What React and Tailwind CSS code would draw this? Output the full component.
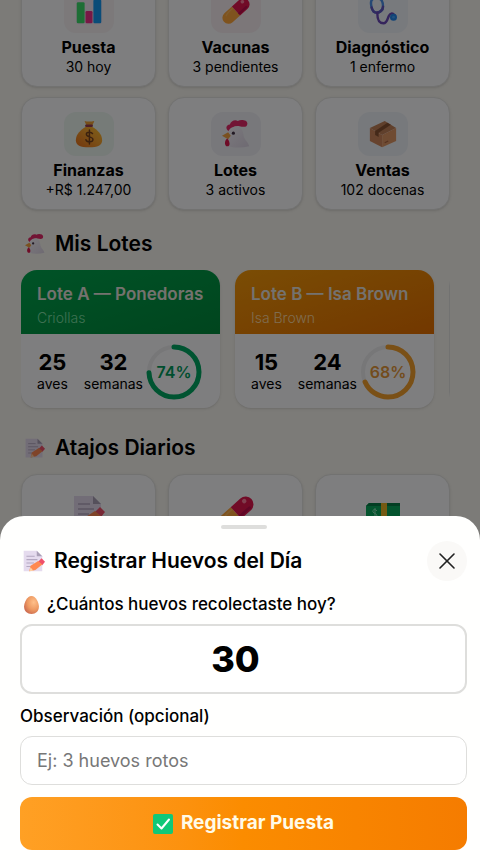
import { X } from "lucide-react";
import { useState } from "react";

function ChartIcon({ className }) {
  return (
    <svg viewBox="0 0 32 32" className={className} aria-hidden="true">
      <rect x="1" y="0" width="30" height="31" rx="3" fill="#f3e8f5" />
      <rect x="2" y="6" width="9" height="24" rx="1.5" fill="#3ddc6a" />
      <rect x="12" y="16" width="8" height="14" rx="1.5" fill="#f0308a" />
      <rect x="21" y="3" width="9" height="27" rx="1.5" fill="#1499f0" />
    </svg>
  );
}

function PillIcon({ className }) {
  return (
    <svg viewBox="0 0 32 32" className={className} aria-hidden="true">
      <g transform="rotate(-42 16 16)">
        <path d="M16 9H4.500a7 7 0 0 0 0 14H16z" fill="#ffa63d" />
        <path d="M16 9h11.500a7 7 0 0 1 0 14H16z" fill="#e3174f" />
        <path d="M4 12.500c3-1.500 7-1.500 11-1.200" stroke="#ffb95a" strokeWidth="1.400" fill="none" strokeLinecap="round" />
        <circle cx="28.500" cy="13" r="2" fill="#ff7f9f" />
        <path d="M17 20.500h11" stroke="#c00d4c" strokeWidth="2.500" strokeLinecap="round" />
      </g>
    </svg>
  );
}

function StethoscopeIcon({ className }) {
  return (
    <svg viewBox="0 0 32 32" className={className} aria-hidden="true" fill="none" strokeLinecap="round">
      <path d="M5 2C2 3 2 8 3 12c1 4 3 6 6 6s7-3 7-7c0-4-1-8-4-9" stroke="#4b91e8" strokeWidth="2.800" />
      <path d="M3 12c1 4 3 6 6 6s7-3 7-7" stroke="#6256c0" strokeWidth="2.800" />
      <path d="M9.500 18c0 7 1 12 7 12s4-10 9-11c2-.5 3 1 4 2" stroke="#6a48b8" strokeWidth="2.800" />
      <circle cx="28" cy="23" r="4" fill="#2489ee" />
      <circle cx="28" cy="23" r="1.500" fill="#46a4ff" />
    </svg>
  );
}

function MoneyBagIcon({ className }) {
  return (
    <svg viewBox="0 0 32 32" className={className} aria-hidden="true">
      <defs>
        <linearGradient id="bag" x1="0" y1="1" x2="1" y2="0">
          <stop offset="0" stopColor="#e86f1c" />
          <stop offset=".55" stopColor="#f5a02e" />
          <stop offset="1" stopColor="#ffc02e" />
        </linearGradient>
      </defs>
      <path d="M11 1c3 1 7 1 11 0-.5 2-1.500 3-2 5h-7c-.5-2-1.500-3-2-5z" fill="#efa035" />
      <path d="M12 8h8c5 3 11 8 11 15 0 6-5 8-15 8S1 29 1 23C1 16 7 11 12 8z" fill="url(#bag)" />
      <rect x="11.500" y="5" width="9" height="3" rx="1.500" fill="#993c50" />
      <path d="M20 15.500c-1-2-7-2.500-7 .7 0 3.800 7.500 2.300 7.500 6 0 3.500-7 3.500-8 .3M16.500 11.500v16" stroke="#77431e" strokeWidth="1.700" fill="none" strokeLinecap="round" />
    </svg>
  );
}

function HenIcon({ className }) {
  return (
    <svg viewBox="0 0 32 32" className={className} aria-hidden="true">
      <defs>
        <linearGradient id="hen" x1="0" y1="0" x2="1" y2="1">
          <stop offset="0" stopColor="#f8f4fb" />
          <stop offset="1" stopColor="#dcd4e4" />
        </linearGradient>
      </defs>
      <path d="M8 13C3 10 5 5 9 5c1-4 6-6 9-4 4-2 11-1 11 3 0 5-5 4-9 3-4-1-8 1-12 6z" fill="#e52868" />
      <path d="M7 14c1-5 7-8 12-6 5 2 5 7 6 11 1 4 5 6 6 11-8 2-17 2-24 0 2-5 0-10 0-16z" fill="url(#hen)" />
      <path d="M7 14l-7 4 7 4 3-4z" fill="#f4a340" />
      <path d="M6 21c-4 3-3 9 0 9 4 0 3-6 0-9z" fill="#df194e" />
      <circle cx="13" cy="15" r="1.800" fill="#443448" />
    </svg>
  );
}

function BoxIcon({ className }) {
  return (
    <svg viewBox="0 0 32 32" className={className} aria-hidden="true">
      <path d="M1 9L18 1l13 8-16 8z" fill="#c08058" />
      <path d="M1 9l14 8v14L1 24z" fill="#cf875c" />
      <path d="M15 17l16-8v15l-16 7z" fill="#df9665" />
      <path d="M7 12.500L21 3l4 2.500-14 9v5l-4-2.500z" fill="#895333" />
      <path d="M18 26l4-2" stroke="#aa6540" strokeWidth="1.500" />
    </svg>
  );
}

function MemoIcon({ className }) {
  return (
    <svg viewBox="0 0 32 32" className={className} aria-hidden="true">
      <path d="M1 1h19l8 8v22H1z" fill="#e5dbee" />
      <path d="M20 1l8 8h-8z" fill="#aaa0b7" />
      <path d="M5 9h12M5 14h16M5 19h11M5 24h7" stroke="#b4a8c1" strokeWidth="1.500" />
      <path d="M27 12l5 5-4 5-6-5z" fill="#f0506a" />
      <path d="M22 16l6 5-10 8-9 2 2-8z" fill="#ff8952" />
      <path d="M11 25l-2 6 6-1z" fill="#ffd0a4" />
    </svg>
  );
}

function CashIcon({ className }) {
  return (
    <svg viewBox="0 0 34 28" className={className} aria-hidden="true">
      <path d="M3 0h31v28H0V3z" fill="#08a85c" />
      <path d="M0 3l3-3h31v3z" fill="#067c47" />
      <path d="M15 0h6v28h-6z" fill="#e9b526" />
      <path d="M11 8C9 5 6 7 7 9s4 1 4 4-4 2-5 0M9 5v10" stroke="#8be0b6" fill="none" />
    </svg>
  );
}

function EggIcon({ className }) {
  return (
    <svg viewBox="0 0 28 34" className={className} aria-hidden="true">
      <defs>
        <radialGradient id="egg" cx=".65" cy=".35" r=".75">
          <stop offset="0" stopColor="#ffc08a" />
          <stop offset=".55" stopColor="#ee9a62" />
          <stop offset="1" stopColor="#c9674e" />
        </radialGradient>
      </defs>
      <path d="M14 0c8 0 14 12 14 20 0 9-6 14-14 14S0 29 0 20C0 12 6 0 14 0z" fill="url(#egg)" />
    </svg>
  );
}

function CheckIcon({ className }) {
  return (
    <svg viewBox="0 0 20 20" className={className} aria-hidden="true">
      <rect width="20" height="20" rx="2" fill="#10c878" />
      <path d="M4.500 10.500l4 4 7.500-9" stroke="#fff" strokeWidth="2" fill="none" strokeLinecap="round" strokeLinejoin="round" />
    </svg>
  );
}

const MODULES = [
  { title: "Puesta", detail: "30 hoy", Icon: ChartIcon, tint: "bg-[#f8f2f4]" },
  { title: "Vacunas", detail: "3 pendientes", Icon: PillIcon, tint: "bg-[#f8eff2]" },
  { title: "Diagnóstico", detail: "1 enfermo", Icon: StethoscopeIcon, tint: "bg-[#f0f4fa]" },
  { title: "Finanzas", detail: "+R$ 1.247,00", Icon: MoneyBagIcon, tint: "bg-[#ecf6f0]" },
  { title: "Lotes", detail: "3 activos", Icon: HenIcon, tint: "bg-[#f0f0f6]" },
  { title: "Ventas", detail: "102 docenas", Icon: BoxIcon, tint: "bg-[#eff3f8]" },
];

const FLOCKS = [
  { name: "Lote A — Ponedoras", breed: "Criollas", birds: 25, weeks: 32, rate: 74, head: "from-[#00a64e] to-[#008a3c]", sub: "text-[#7ee0a5]", ring: "#00a862", rateText: "text-[#009d5c]" },
  { name: "Lote B — Isa Brown", breed: "Isa Brown", birds: 15, weeks: 24, rate: 68, head: "from-[#f59a0a] to-[#e56f00]", sub: "text-[#ffd9a0]", ring: "#f5a02d", rateText: "text-[#e6993a]" },
];

const SHORTCUTS = [
  { label: "Registrar puesta", Icon: MemoIcon, size: "h-8 w-8" },
  { label: "Registrar vacuna", Icon: PillIcon, size: "h-9 w-9" },
  { label: "Registrar venta", Icon: CashIcon, size: "mt-2 h-7 w-[34px]" },
];

function ModuleCard({ title, detail, Icon, tint }) {
  return (
    <button className="flex h-[113px] flex-col items-center rounded-2xl border border-[#e4e4e2] bg-[#fcfcff] pt-3.5 shadow-sm">
      <span className={`grid h-11 w-[50px] place-items-center rounded-xl ${tint}`}>
        <Icon className="h-7 w-7" />
      </span>
      <span className="mt-0.5 text-base leading-6 font-bold">{title}</span>
      <span className="text-sm leading-4">{detail}</span>
    </button>
  );
}

function Ring({ value, color, textClass }) {
  const length = 2 * Math.PI * 25;
  return (
    <div className="relative ml-[3px] grid h-14 w-14 shrink-0 place-items-center">
      <svg viewBox="0 0 56 56" className="absolute inset-0 -rotate-90" fill="none" aria-hidden="true">
        <circle cx="28" cy="28" r="25" stroke="#eeeef0" strokeWidth="4" />
        <circle cx="28" cy="28" r="25" stroke={color} strokeWidth="5" strokeLinecap="round" strokeDasharray={`${(length * value) / 100} ${length}`} />
      </svg>
      <span className={`relative text-base font-semibold ${textClass}`}>{value}%</span>
    </div>
  );
}

function Stat({ value, label }) {
  return (
    <div className="flex flex-col items-center">
      <span className="text-[22px] leading-6 font-bold">{value}</span>
      <span className="text-sm leading-5">{label}</span>
    </div>
  );
}

function FlockCard({ flock }) {
  return (
    <article className="w-[199px] shrink-0 overflow-hidden rounded-2xl bg-[#fcfcff] shadow-sm">
      <header className={`h-16 bg-linear-to-br px-4 pt-3 ${flock.head}`}>
        <h3 className="text-[17px] leading-6 font-semibold whitespace-nowrap text-[#e8e4de]">{flock.name}</h3>
        <p className={`text-sm leading-6 font-light ${flock.sub}`}>{flock.breed}</p>
      </header>
      <div className="flex h-[74px] items-center pt-0.5 pl-4">
        <Stat value={flock.birds} label="aves" />
        <div className="ml-4">
          <Stat value={flock.weeks} label="semanas" />
        </div>
        <Ring value={flock.rate} color={flock.ring} textClass={flock.rateText} />
      </div>
    </article>
  );
}

function SectionTitle({ Icon, children }) {
  return (
    <h2 className="flex h-8 items-center gap-2 pl-0.5 text-[21px] leading-8 font-semibold">
      <Icon className="h-5 w-6" />
      {children}
    </h2>
  );
}

function EggSheet() {
  const [count, setCount] = useState("30");
  const [note, setNote] = useState("");

  return (
    <section role="dialog" aria-labelledby="sheet-title" className="fixed inset-x-0 bottom-0 rounded-t-3xl bg-[#fffffe] pr-[13px] pb-2.5 pl-5">
      <div className="mx-auto mt-[9px] h-1 w-[46px] rounded-full bg-[#dededc]" />
      <form onSubmit={(event) => event.preventDefault()}>
        <div className="mt-3 flex h-10 items-center gap-2">
          <MemoIcon className="ml-0.5 h-[22px] w-6" />
          <h2 id="sheet-title" className="flex-1 text-[21px] leading-8 font-semibold">Registrar Huevos del Día</h2>
          <button type="button" aria-label="Cerrar" className="grid h-10 w-10 place-items-center rounded-full bg-[#faf9f7] text-[#222]">
            <X className="h-7 w-7" strokeWidth={1.4} />
          </button>
        </div>
        <label htmlFor="eggs" className="mt-3 flex h-6 items-center gap-2 text-[17px] font-medium">
          <EggIcon className="ml-1 h-[18px] w-[15px]" />
          ¿Cuántos huevos recolectaste hoy?
        </label>
        <input id="eggs" inputMode="numeric" value={count} onChange={(event) => setCount(event.target.value)} className="mt-[7px] h-[70px] w-full rounded-xl border-2 border-[#dededc] bg-white pr-4 text-center text-4xl font-extrabold outline-none" />
        <label htmlFor="note" className="mt-2.5 block text-[17px] leading-6 font-medium">Observación (opcional)</label>
        <input id="note" value={note} onChange={(event) => setNote(event.target.value)} placeholder="Ej: 3 huevos rotos" className="mt-2 h-[49px] w-full rounded-xl border border-[#dededc] bg-white px-4 text-lg outline-none placeholder:text-[#777]" />
        <button className="mt-3 flex h-[53px] w-full items-center justify-center gap-2 rounded-xl bg-linear-to-r from-[#ffa024] via-[#fb8c00] to-[#f57c00] text-[19px] font-bold text-[#fffbe8]">
          <CheckIcon className="h-5 w-5" />
          Registrar Puesta
        </button>
      </form>
    </section>
  );
}

export default function App() {
  return (
    <div className="h-screen overflow-hidden bg-[#f8f6f0] font-['Inter',sans-serif] text-black">
      <main className="-mt-[26px] pr-[30px] pl-[21px]">
        <div className="grid grid-cols-3 gap-x-3 gap-y-[10px]">
          {MODULES.map((item) => (
            <ModuleCard key={item.title} {...item} />
          ))}
        </div>
        <div className="mt-[18px]">
          <SectionTitle Icon={HenIcon}>Mis Lotes</SectionTitle>
        </div>
        <div className="mt-2.5 flex gap-[15px] overflow-hidden pb-1">
          {FLOCKS.map((flock) => (
            <FlockCard key={flock.name} flock={flock} />
          ))}
          <div className="w-[199px] shrink-0 rounded-2xl border border-[#e4e4e2] bg-[#fcfcff]" />
        </div>
        <div className="mt-5">
          <SectionTitle Icon={MemoIcon}>Atajos Diarios</SectionTitle>
        </div>
        <div className="mt-2.5 grid grid-cols-3 gap-x-3">
          {SHORTCUTS.map(({ label, Icon, size }) => (
            <button key={label} aria-label={label} className="flex h-[113px] flex-col items-center rounded-2xl border border-[#e4e4e2] bg-[#fcfcff] pt-5 shadow-sm">
              <Icon className={size} />
            </button>
          ))}
        </div>
      </main>
      <div className="fixed inset-0 bg-black/50" />
      <EggSheet />
    </div>
  );
}
